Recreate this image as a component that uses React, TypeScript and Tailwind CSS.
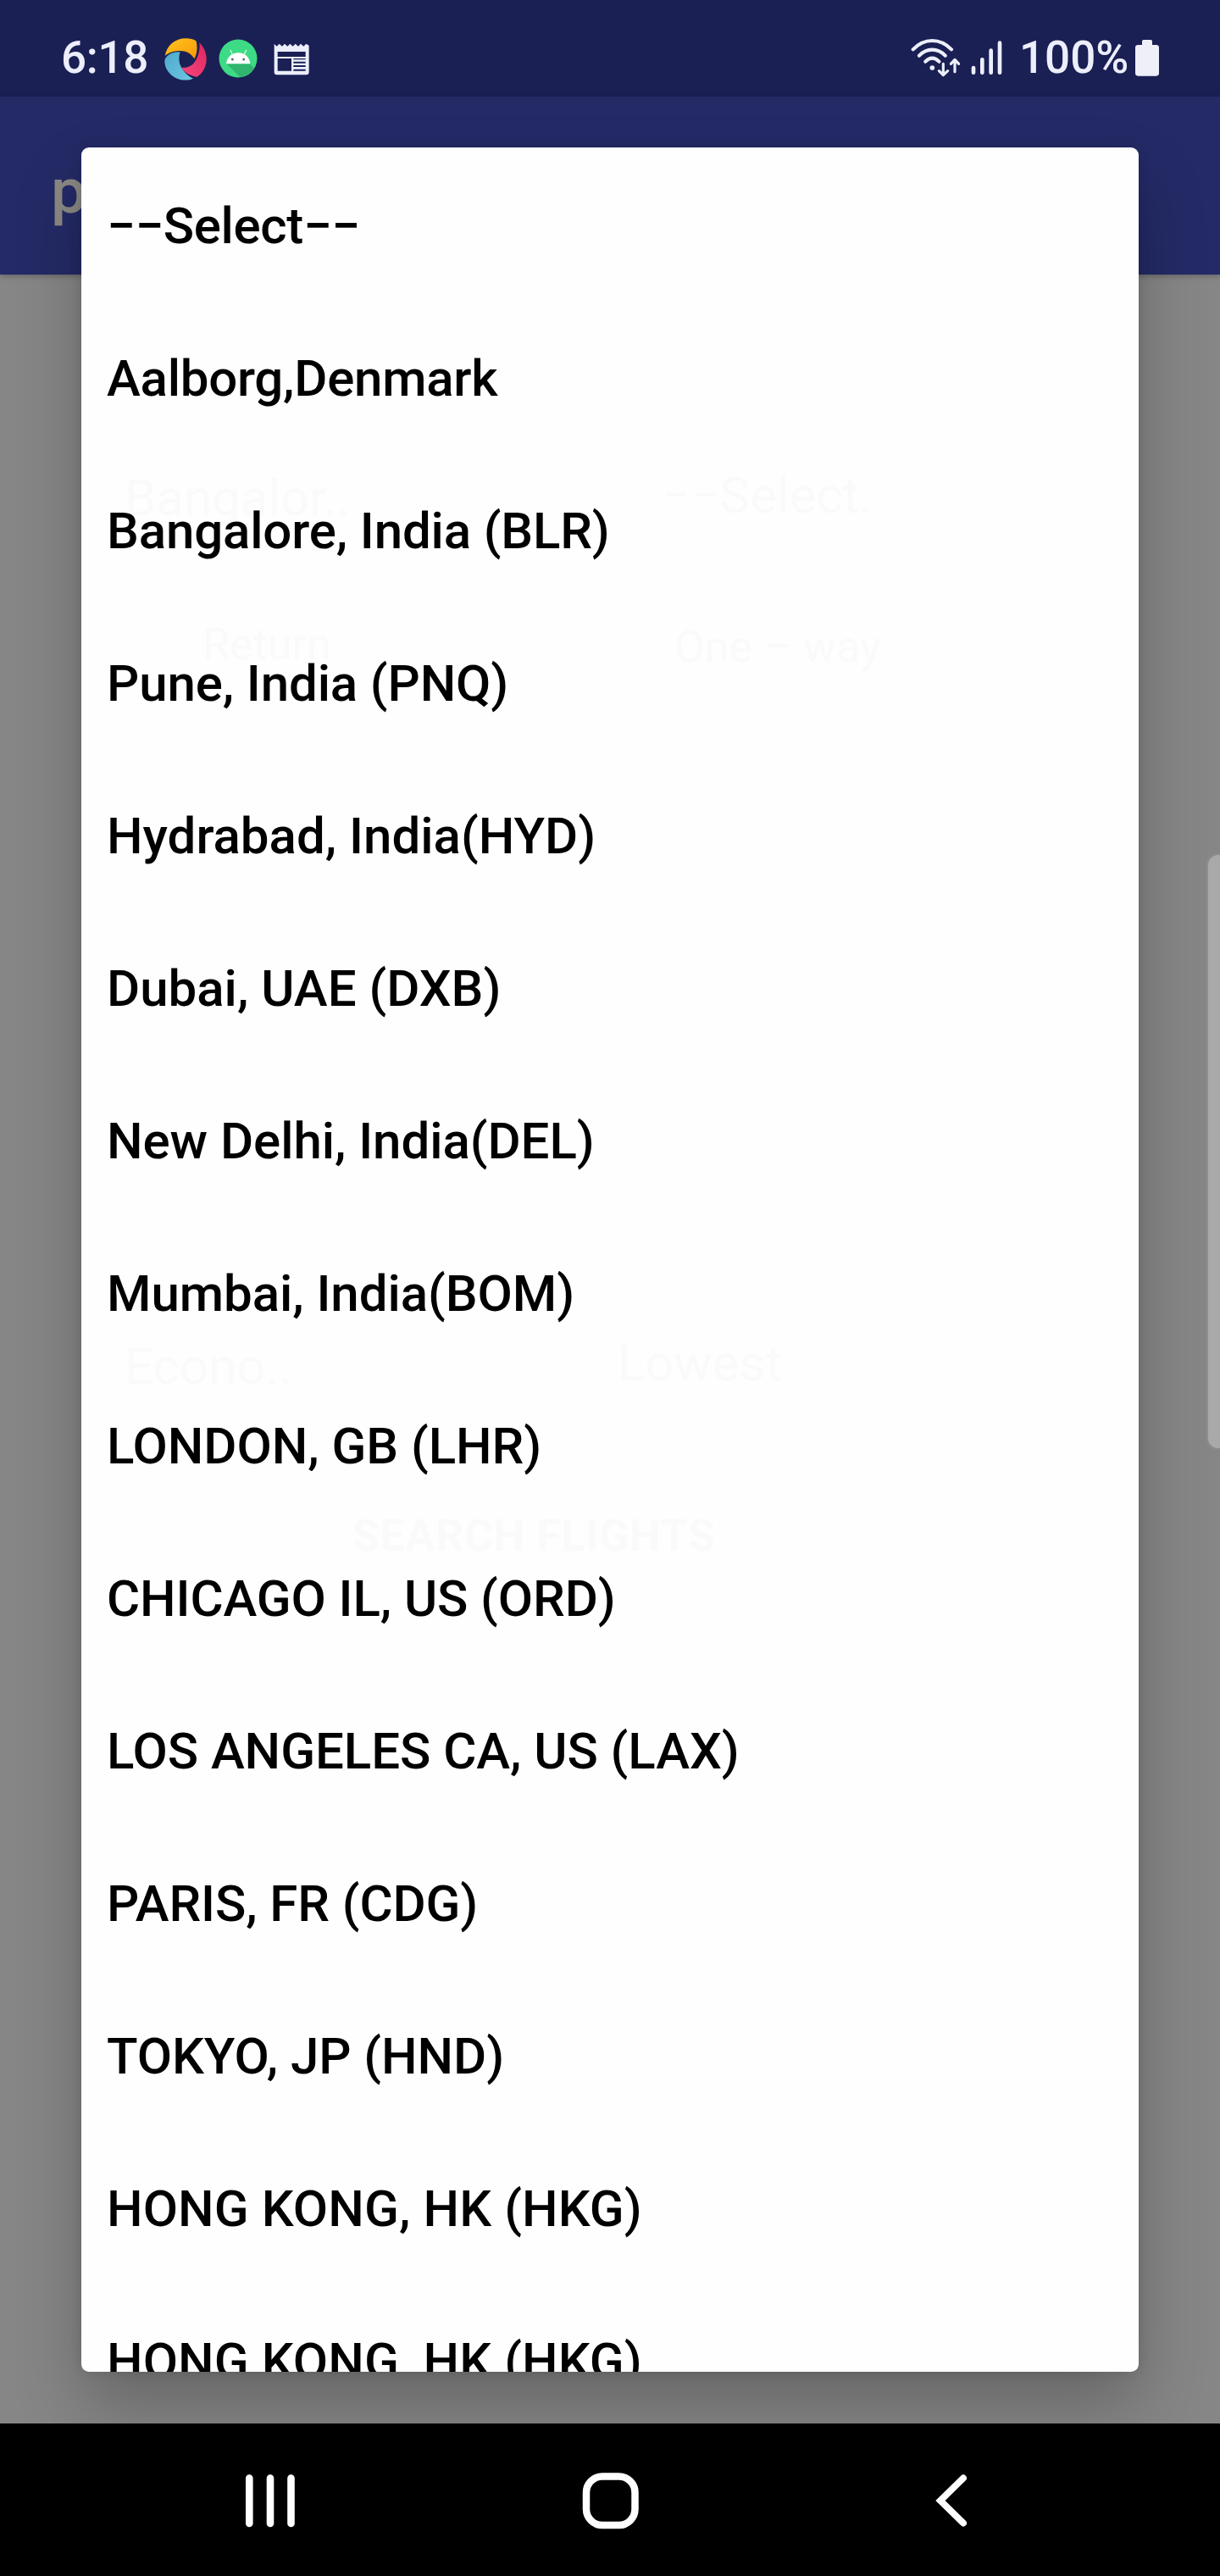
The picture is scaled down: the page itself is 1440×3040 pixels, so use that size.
const airports = [
  { name: '−−Select−−', tracking: 'tracking-[-0.35px]' },
  { name: 'Aalborg,Denmark', tracking: 'tracking-[-0.25px]' },
  { name: 'Bangalore, India (BLR)', tracking: 'tracking-[-0.15px]' },
  { name: 'Pune, India (PNQ)', tracking: 'tracking-[-0.12px]' },
  { name: 'Hydrabad, India(HYD)', tracking: 'tracking-normal' },
  { name: 'Dubai, UAE (DXB)', tracking: 'tracking-normal' },
  { name: 'New Delhi, India(DEL)', tracking: 'tracking-[-0.05px]' },
  { name: 'Mumbai, India(BOM)', tracking: 'tracking-[-0.05px]' },
  { name: 'LONDON, GB (LHR)', tracking: 'tracking-[-0.05px]' },
  { name: 'CHICAGO IL, US (ORD)', tracking: 'tracking-[-0.1px]' },
  { name: 'LOS ANGELES CA, US (LAX)', tracking: 'tracking-[-0.05px]' },
  { name: 'PARIS, FR (CDG)', tracking: 'tracking-[-0.1px]' },
  { name: 'TOKYO, JP (HND)', tracking: 'tracking-[-0.05px]' },
  { name: 'HONG KONG, HK (HKG)', tracking: 'tracking-[0.1px]' },
  { name: 'HONG KONG, HK (HKG)', tracking: 'tracking-[0.1px]' },
];

function PinwheelIcon() {
  return (
    <svg className="h-[50px] w-[50px]" viewBox="41 43 150 150">
      <defs>
        <linearGradient id="amber" x1="0" y1="0" x2="1" y2="1">
          <stop offset="0" stopColor="#ffc41c" />
          <stop offset="1" stopColor="#f99a0c" />
        </linearGradient>
        <linearGradient id="rose" x1="1" y1="0" x2="0" y2="1">
          <stop offset="0" stopColor="#e0265e" />
          <stop offset="1" stopColor="#f5477c" />
        </linearGradient>
        <linearGradient id="sky" x1="0" y1="0" x2="1" y2="1">
          <stop offset="0" stopColor="#4fa9cb" />
          <stop offset="1" stopColor="#6cc6e2" />
        </linearGradient>
      </defs>
      <path d="M43 106C50 68 80 44 116 44C130 44 146 47 154 54C159 78 157 98 147 116C136 97 118 88 97 88C76 88 56 94 43 106Z" fill="url(#amber)" />
      <path d="M165 59C181 75 190 94 190 117C190 143 178 166 157 180C133 176 113 166 101 147C124 150 141 141 152 122C163 102 168 80 165 59Z" fill="url(#rose)" />
      <path d="M42 122C47 103 68 91 97 92C90 112 92 133 104 152C116 169 128 180 143 186C128 193 105 194 86 186C57 174 41 148 42 122Z" fill="url(#sky)" />
    </svg>
  );
}

function AndroidIcon() {
  return (
    <svg className="h-[46px] w-[46px]" viewBox="0 0 138 138">
      <circle cx="69" cy="69" r="67.500" fill="#3ddb85" />
      <path d="M28 88H112L125 104A67 67 0 0 1 77 136Z" fill="#2fb56d" />
      <path d="M27 88C29 65 47 49 70 49S110 65 112 88Z" fill="#fff" />
      <path d="M49 55L42 40M90 55L98 40" stroke="#d8f7e6" strokeWidth="4" strokeLinecap="round" />
      <circle cx="49" cy="72" r="4.500" fill="#557566" />
      <circle cx="89" cy="72" r="4.500" fill="#557566" />
    </svg>
  );
}

function NewsIcon() {
  return (
    <svg className="h-[38px] w-[42px]" viewBox="0 0 126 114">
      <path
        fillRule="evenodd"
        fill="#eceefb"
        d="M2 2L11 11L20 2L30 11L39 2L49 11L58 2L68 11L77 2L87 11L96 2L106 11L115 2L125 8V102Q125 112 115 112H12Q2 112 2 102ZM14 30V48H113V30ZM14 54V98H63V54ZM70 54V58H113V54ZM70 65V71H113V65ZM70 78V84H113V78ZM70 92V98H113V92Z"
      />
    </svg>
  );
}

function NetworkIcon() {
  return (
    <svg className="h-[46px] w-[110px]" viewBox="105 135 330 138" fill="none" stroke="#eceefb" strokeLinecap="round" strokeLinejoin="round">
      <path d="M113 175Q143 144 181 144T249 175M135 197Q155 176 181 176T227 197M157 218Q168 206 181 206T205 218" strokeWidth="12.500" />
      <circle cx="181" cy="240" r="8.500" fill="#eceefb" stroke="none" />
      <path d="M220 226V265M205 251L220 266L236 251M261 254V212M247 226L261 211L275 226" strokeWidth="9.500" />
      <path d="M327 240V257M358 211V257M389 179V257M420 152V257" strokeWidth="14" />
    </svg>
  );
}

function BatteryIcon() {
  return (
    <svg className="h-[43px] w-[28px]" viewBox="0 0 84 129" fill="#efeff8">
      <path d="M24 18V5Q24 0 29 0H55Q60 0 60 5V18H74Q84 18 84 28V118Q84 128 74 128H10Q0 128 0 118V28Q0 18 10 18Z" />
    </svg>
  );
}

export default function App() {
  return (
    <div className="relative flex h-[3040px] w-[1440px] flex-col overflow-hidden bg-[#868686] font-['Roboto',sans-serif] font-medium">
      <header className="flex h-[114px] shrink-0 items-start justify-between bg-[#1a2054] pl-[72px] pr-[72px] text-[53px] leading-[62px] text-[#eceefb]">
        <div className="flex pt-[37px]">
          <span className="w-[122px] tracking-[-0.3px]">6:18</span>
          <div className="mt-[8px]"><PinwheelIcon /></div>
          <div className="ml-[14px] mt-[9px]"><AndroidIcon /></div>
          <div className="ml-[19px] mt-[14px]"><NewsIcon /></div>
        </div>
        <div className="flex pt-[37px]">
          <div className="mt-[8px]"><NetworkIcon /></div>
          <span className="ml-[18px] w-[137px] whitespace-nowrap">100%</span>
          <div className="mt-[10px]"><BatteryIcon /></div>
        </div>
      </header>

      <div className="h-[210px] shrink-0 bg-[#242a66] pl-[60px] pt-[67px] text-[75px] leading-[88px] text-[#8b8984] shadow-[0_2px_6px_rgba(0,0,0,0.25)]">
        p
      </div>
      <main className="flex-1" />

      <nav className="z-20 flex h-[180px] shrink-0 items-start bg-black pt-[57px]">
        <svg className="ml-[286px] h-[68px] w-[66px]" viewBox="0 0 66 68" stroke="#fff" strokeWidth="8.600" strokeLinecap="round">
          <path d="M8.300 7.500V61M33 7.500V61M57.500 7.500V61" />
        </svg>
        <svg className="ml-[335px] h-[68px] w-[68px]" viewBox="0 0 68 68" fill="none" stroke="#fff" strokeWidth="8.500">
          <rect x="5" y="5.500" width="57.500" height="57.500" rx="19" />
        </svg>
        <svg className="ml-[345px] h-[68px] w-[48px]" viewBox="0 0 48 68" fill="none" stroke="#fff" strokeWidth="8" strokeLinecap="round">
          <path d="M37 7.500L10 34L37 60.500" />
        </svg>
      </nav>

      <div className="absolute left-[1426px] top-[1009px] h-[700px] w-[20px] rounded-l-[12px] bg-[#a9a9a9] shadow-[0_0_4px_rgba(169,169,169,0.6)]" />

      <section className="absolute left-[96px] top-[174px] z-10 h-[2625px] w-[1248px] overflow-hidden rounded-[9px] bg-[#fefefe] shadow-[0_0_14px_rgba(0,0,0,0.12),0_42px_80px_rgba(0,0,0,0.23)]">
        <div className="absolute inset-0 whitespace-nowrap text-[60px] font-normal leading-[70px] text-[#fafafa]">
          <span className="absolute left-[51px] top-[379px]">Bangalor..</span>
          <span className="absolute left-[685px] top-[376px]">−−Select.</span>
          <span className="absolute left-[143px] top-[552px] text-[52px]">Return</span>
          <span className="absolute left-[700px] top-[555px] text-[52px]">One – way</span>
          <span className="absolute left-[51px] top-[1404px]">Econo..</span>
          <span className="absolute left-[633px] top-[1400px]">Lowest</span>
          <span className="absolute left-[320px] top-[1604px] text-[52px] font-bold tracking-[0.6px]">SEARCH FLIGHTS</span>
        </div>
        <ul className="relative text-[60px] leading-[70px] text-black">
          {airports.map(({ name, tracking }, index) => (
            <li key={index} className={`h-[180px] whitespace-nowrap pl-[30px] pt-[58px] ${tracking}`}>
              {name}
            </li>
          ))}
        </ul>
      </section>
    </div>
  );
}
